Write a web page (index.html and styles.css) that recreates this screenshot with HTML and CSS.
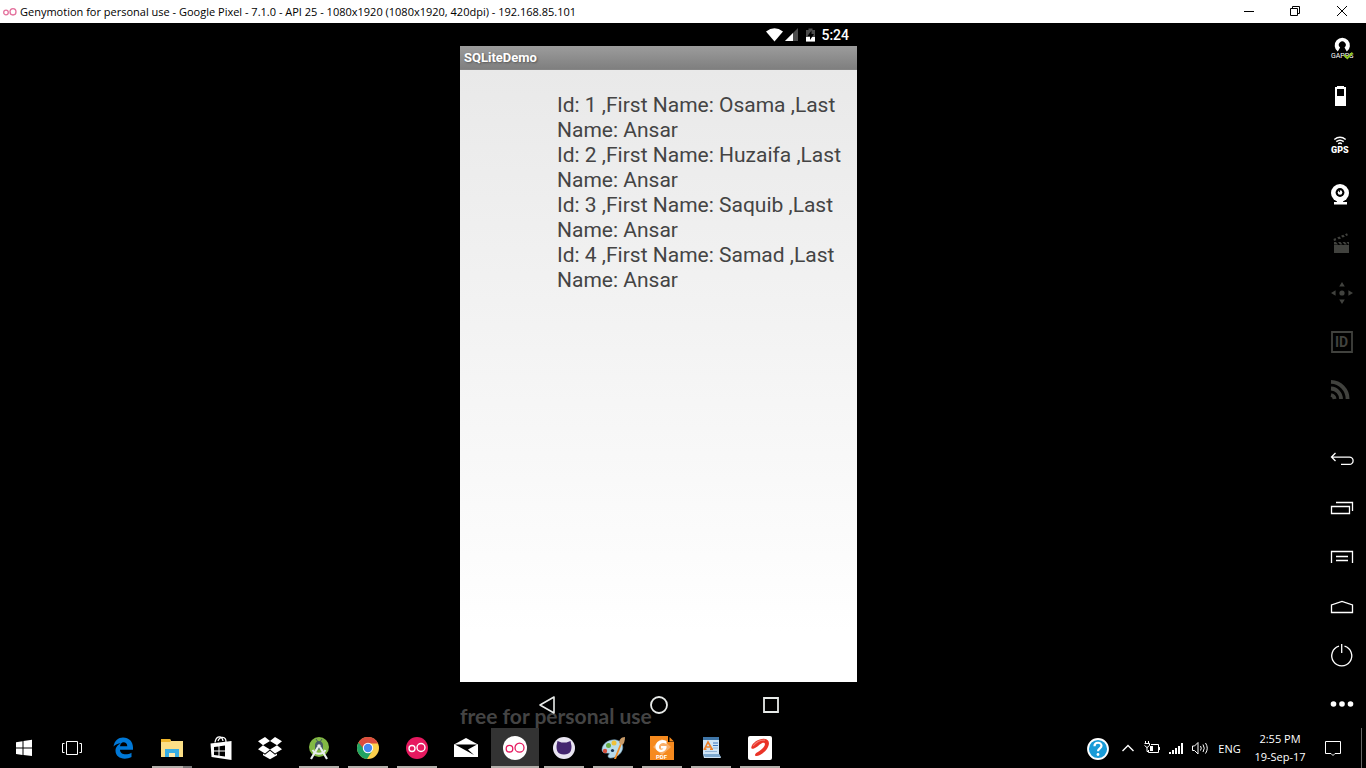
FILE: index.html
```html
<!DOCTYPE html>
<html lang="en">
<head>
<meta charset="utf-8">
<meta name="viewport" content="width=device-width, initial-scale=1">
<title>Genymotion for personal use</title>
<link rel="stylesheet" href="styles.css">
</head>
<body>
<div class="desktop">
  <header class="titlebar">
    <svg class="titlebar-logo" width="16" height="16" viewBox="0 0 16 16" fill="none" stroke="#e4719d" stroke-width="1.3"><circle cx="4" cy="8.5" r="2.3"/><ellipse cx="11" cy="7.8" rx="3" ry="3.2"/></svg>
    <h1 class="titlebar-text">Genymotion for personal use - Google Pixel - 7.1.0 - API 25 - 1080x1920 (1080x1920, 420dpi) - 192.168.85.101</h1>
    <div class="window-controls">
      <button class="window-button" aria-label="Minimize"><svg width="12" height="12" viewBox="0 0 12 12" stroke="#000"><path d="M1 6.500h10"/></svg></button>
      <button class="window-button" aria-label="Restore"><svg width="12" height="12" viewBox="0 0 12 12" fill="none" stroke="#000"><path d="M1.500 3.500h7v7h-7zM3.500 3.500v-2h7v7h-2"/></svg></button>
      <button class="window-button" aria-label="Close"><svg width="12" height="12" viewBox="0 0 12 12" stroke="#000"><path d="M1 1l10 10M11 1L1 11"/></svg></button>
    </div>
  </header>

  <main class="emulator">
    <div class="stage">
      <section class="phone" aria-label="Device screen">
        <div class="status">
          <svg width="52" height="16" viewBox="0 0 52 16">
            <path d="M1 4.500Q9.500-1.800 18 4.500L9.500 14.500z" fill="#fff"/>
            <path d="M33 1v13H20z" fill="#4c4c4c"/><path d="M28 6v8h-8z" fill="#fff"/>
            <path d="M41 3h2.500V1.500h4V3H50v11.500h-9z" fill="#4c4c4c"/><path d="M41 10h9v4.500h-9z" fill="#fff"/>
            <path d="M46.500 3.500l-4 5.500h2.500v4l4-6h-2.500z" fill="#000"/>
          </svg>
          <span>5:24</span>
        </div>
        <h2 class="appbar">SQLiteDemo</h2>
        <div class="app">
          <p class="records">Id: 1 ,First Name: Osama ,Last Name: Ansar<br>Id: 2 ,First Name: Huzaifa ,Last Name: Ansar<br>Id: 3 ,First Name: Saquib ,Last Name: Ansar<br>Id: 4 ,First Name: Samad ,Last Name: Ansar</p>
        </div>
        <div class="navbar">
          <span class="watermark">free for personal use</span>
          <button class="nav-button" aria-label="Back"><svg width="20" height="20" viewBox="0 0 20 20" fill="none" stroke="#e8ebe9" stroke-width="1.600" stroke-linejoin="round"><path d="M17 2v16L3 10z"/></svg></button>
          <button class="nav-button" aria-label="Home"><svg width="20" height="20" viewBox="0 0 20 20" fill="none" stroke="#e8ebe9" stroke-width="1.800"><circle cx="10" cy="10" r="8"/></svg></button>
          <button class="nav-button" aria-label="Recents"><svg width="20" height="20" viewBox="0 0 20 20" fill="none" stroke="#e8ebe9" stroke-width="1.800"><path d="M3 3h14v14H3z"/></svg></button>
        </div>
      </section>
    </div>

    <aside class="tools">
      <div class="tool-group">
        <button class="tool" aria-label="Open GApps"><svg viewBox="0 0 49 49"><path d="M20.800 28.500a7.600 7.600 0 1 1 9 0l-2.300-4a3.400 3.400 0 1 0-4.400 0z" fill="#fff"/><path d="M23.300 29l1-5.200a1.600 1.600 0 1 1 2 0l1 5.200z" fill="#000"/><text class="label-gapps" x="14" y="35">GAPPS</text><path d="M27 32l3.300 3.200 5.200-5.500" fill="none" stroke="#8fc31f" stroke-width="2"/></svg></button>
        <button class="tool" aria-label="Battery"><svg viewBox="0 0 49 49"><path d="M18 15h2v-1h7v1h2v19H18z" fill="#fff"/><path d="M20 17h7v7h-7z" fill="#000"/></svg></button>
        <button class="tool" aria-label="GPS"><svg viewBox="0 0 49 49"><g fill="none" stroke="#fff" stroke-width="1.500"><path d="M17.300 18.500q5.700-4.500 11.400 0M19.300 20.700q3.700-2.800 7.400 0"/><path d="M21.200 22.800q1.800-1.500 3.600 0"/></g><text class="label-gps" x="14" y="32">GPS</text></svg></button>
        <button class="tool" aria-label="Camera"><svg viewBox="0 0 49 49"><circle cx="23" cy="23" r="9" fill="#fff"/><path d="M20 31h6v1h4v2.500H17V32h3z" fill="#fff"/><circle cx="23" cy="22.500" r="4.400" fill="#000"/><circle cx="23" cy="22.500" r="2.300" fill="#fff"/><path d="M23 22.500v-2.300h-2.300z" fill="#000"/></svg></button>
        <button class="tool" aria-label="Screencast"><svg viewBox="0 0 49 49" fill="#41423e"><path d="M17 26h15v8H17zM17 23h2l2 2.500h-4zM21 23h2.500l2 2.500H23zM25.500 23H28l2 2.500h-2.500zM29.500 23H32v2.500h-.5zM16.500 20l2-1 .8 2.300-2.300.7zM20.200 18.400l2.300-.9 1.500 2-2.300.8zM24 16.800l2.300-1 1.500 2-2.300.8zM28 15.200l2-.9.900 2-1.500.7z"/></svg></button>
        <button class="tool" aria-label="Move"><svg viewBox="0 0 49 49" fill="#41423e"><circle cx="25" cy="25" r="2.600"/><path d="M25 14l2.800 4.600h-5.600zM25 36l2.800-4.600h-5.600zM14 25l4.600-2.800v5.600zM36 25l-4.600-2.800v5.600z"/></svg></button>
        <button class="tool" aria-label="Identifiers"><svg viewBox="0 0 49 49"><path d="M15 15h20v20H15z" fill="none" stroke="#41423e" stroke-width="1.800"/><text class="label-id" x="18" y="30">ID</text></svg></button>
        <button class="tool" aria-label="Network"><svg viewBox="0 0 49 49" fill="none" stroke="#41423e" stroke-width="3.800"><path d="M14 15.900A17 17 0 0 1 30.600 33M14 22.500a10.500 10.500 0 0 1 10 10.500"/><path d="M14 29a4.500 4.500 0 0 1 3.600 4"/></svg></button>
      </div>
      <div class="tool-group">
        <button class="tool" aria-label="Back"><svg viewBox="0 0 49 49" class="line"><path d="M18.500 19l-4 4 4 4M14.500 23.200H32.500a3.500 3.500 0 0 1 0 7.200H24"/></svg></button>
        <button class="tool" aria-label="Recent apps"><svg viewBox="0 0 49 49" class="line"><path d="M14.500 23.500h18v7h-18zM19 19.500h16.500V28"/></svg></button>
        <button class="tool" aria-label="Menu"><svg viewBox="0 0 49 49" class="line"><path d="M14.500 31V19.500h21V31M19 24.500h12M19 28.500h12"/></svg></button>
        <button class="tool" aria-label="Home"><svg viewBox="0 0 49 49" class="line"><path d="M14.500 31.500V24L25 20.500 35.500 24v7.500z"/></svg></button>
        <button class="tool" aria-label="Power"><svg viewBox="0 0 49 49" class="line"><path d="M22 16.200a10 10 0 1 0 5.500 0M24.700 14v9"/></svg></button>
        <button class="tool" aria-label="More"><svg viewBox="0 0 49 49" fill="#fff"><circle cx="16.500" cy="25" r="2.800"/><circle cx="25" cy="25" r="2.800"/><circle cx="33.500" cy="25" r="2.800"/></svg></button>
      </div>
    </aside>
  </main>

  <footer class="taskbar">
    <div class="system-buttons">
      <button class="task" aria-label="Start"><svg viewBox="0 0 24 24" fill="#fff"><path d="M4 6.200l6.500-1v6.300H4zM11.500 5l8.500-1.200v7.700h-8.500zM4 12.500h6.500v6.400L4 18zM11.500 12.500H20V20l-8.500-1z"/></svg></button>
      <button class="task" aria-label="Task view"><svg viewBox="0 0 24 24" fill="none" stroke="#fff"><path d="M6.500 5.500h11v13h-11zM4.500 7.500h-2v9h2M19.500 7.500h2v9h-2"/></svg></button>
    </div>
    <nav class="apps" aria-label="Applications">
      <button class="task" aria-label="Edge"><svg viewBox="0 0 24 24"><path d="M2.500 10.500C3.500 4.500 7.500 1.500 12 1.500c6 0 10 4.200 10 10v2.300H9c0 5 7 5.700 11.500 2.900v4.400C13 24.700 4.500 22 4.500 14.800c0-3.500 2.300-6.400 5.500-7.600-3 .2-5.800 1.300-7.500 3.300zM9 10.300h7.300c0-3-1.800-4.100-3.600-4.100-2.200 0-3.500 1.700-3.700 4.100z" fill="#0078d7"/></svg></button>
      <button class="task running grouped" aria-label="File Explorer"><svg viewBox="0 0 24 24"><path d="M1 3h9l1 2h12v16H1z" fill="#fbdf86"/><path d="M1 3h9l1 2-1 1H1z" fill="#efb62b"/><path d="M5 13h14v8h-4v-4H9v4H5z" fill="#37aee3"/><path d="M9 17h6v4H9z" fill="#fbe9ac"/></svg></button>
      <button class="task" aria-label="Store"><svg viewBox="0 0 24 24"><path d="M6 6.500C7-.5 13-1 14 5M9 5c2-5 8-5 8 1" fill="none" stroke="#fff" stroke-width="1.300"/><path d="M1.500 7.500L22.500 5v19L2.500 21z" fill="#fff"/><path d="M5 11l4.500-.6v4.200H5zM10.500 10.200l5.500-.7v5.100h-5.500zM5 15.500h4.500v4.100L5 19zM10.500 15.500H16v5l-5.500-.7z" fill="#000"/></svg></button>
      <button class="task" aria-label="Dropbox"><svg viewBox="0 0 24 24" fill="#fff"><path d="M7 1l5 4-7 4.300-5-4zM17 1l-5 4 7 4.300 5-4zM0 13.200l5-3.900 7 4.300-5 4zM24 13.200l-5-3.900-7 4.300 5 4zM12 14.800l5 4 2-1.300v1.700l-7 4-7-4v-1.700l2 1.300z"/></svg></button>
      <button class="task running" aria-label="Android Studio"><svg viewBox="0 0 24 24"><circle cx="12" cy="11" r="10" fill="#82b944"/><path d="M8.500 9a3.500 3.500 0 0 1 7 0v4h-7zM9 3l2 3M15 3l-2 3" fill="#455a64" stroke="#455a64"/><path d="M11 11L4 23M13 11l7 12" stroke="#e8eeee" stroke-width="2.200"/><path d="M5.500 14c3 5 10 5 13 0" fill="none" stroke="#e8eeee" stroke-width="2"/><circle cx="12" cy="10" r="1.800" fill="#eee"/></svg></button>
      <button class="task running" aria-label="Chrome"><svg viewBox="0 0 24 24"><circle cx="12" cy="12" r="11" fill="#fcd04b"/><path d="M12 12L2.500 6.500A11 11 0 0 0 11 23l5.500-8.500z" fill="#20a363"/><path d="M12 12H7L2.500 6.500a11 11 0 0 1 19.500 1H12z" fill="#dc4d3f"/><circle cx="12" cy="12" r="5.200" fill="#fff"/><circle cx="12" cy="12" r="4.200" fill="#4587f3"/></svg></button>
      <button class="task running" aria-label="Genymotion"><svg viewBox="0 0 24 24"><circle cx="12" cy="12" r="11" fill="#e6195f"/><g fill="none" stroke="#fff" stroke-width="1.400"><circle cx="7" cy="12.500" r="3"/><circle cx="16" cy="11.500" r="4"/></g></svg></button>
      <button class="task" aria-label="Mail"><svg viewBox="0 0 24 24"><path d="M0 8.500L12 2l12 6.500V21H0z" fill="#fff"/><path d="M1 8.500h22l-9 5 6 5.500-10-5.500z" fill="#000"/></svg></button>
      <button class="task running active" aria-label="Genymotion player"><svg viewBox="0 0 24 24"><circle cx="12" cy="12" r="12" fill="#fff"/><g fill="none" stroke="#e6195f" stroke-width="1.300"><circle cx="6.500" cy="12.700" r="3.300"/><circle cx="16.500" cy="11.700" r="4.500"/></g></svg></button>
      <button class="task running" aria-label="GitHub Desktop"><svg viewBox="0 0 24 24"><circle cx="12" cy="12" r="11" fill="#e9e5f2"/><path d="M5.500 5l4 1.500h5l4-1.500 1 5c0 4.500-1 8.500-7.500 8.500S4.500 14.500 4.500 10z" fill="#442670"/></svg></button>
      <button class="task running" aria-label="Paint"><svg viewBox="0 0 24 24"><path d="M1 14C1 7 9 3 15 4c5 1 7.500 5 6.500 9-1 5-7 9-12 9-3 0-3-3-1-4 1-2-7 1-7.500-4z" fill="#b9dcec" stroke="#7ca9c6" stroke-width=".6"/><circle cx="4" cy="15" r="2.200" fill="#d6503c"/><circle cx="7.500" cy="9.500" r="2.500" fill="#67ad43"/><circle cx="13" cy="7" r="2.500" fill="#f0c13a"/><circle cx="11.500" cy="14.500" r="1.600" fill="#17324f"/><path d="M13 23l6-15 1.500.8L15 23z" fill="#f2902a"/><path d="M18 7c0-3 2-6 6-6 0 4-1 7-3 8z" fill="#c99b68"/></svg></button>
      <button class="task running" aria-label="Foxit PDF"><svg viewBox="0 0 24 24"><path d="M0 0h18v6h6v18H0z" fill="#f68a1e"/><path d="M19.500 1v4.500h4.500z" fill="#f68a1e"/><path d="M12 3l9 8-9 8-9-8z" fill="#f9ae67"/><path d="M16.500 5C11 2 5 6 5.500 11c.5 6 9 7 11 1v-2H11v2.500h2.500C11 15 8.500 13 9 10.500 9.500 7.500 13 6 16.500 8z" fill="#fff"/><text class="label-pdf" x="6" y="23">PDF</text></svg></button>
      <button class="task running" aria-label="WordPad"><svg viewBox="0 0 24 24"><path d="M4 1h16v17l2 4H5l-1-4z" fill="#cfe4f5"/><path d="M4 1h16v3H4z" fill="#3f76a8"/><path d="M4 18h16l2 3H6z" fill="#7da9cf"/><path d="M14 7h5M14 9.500h5" stroke="#3c75bd"/><path d="M14 12h5M6 15.500h12" stroke="#8fb4d8"/><path d="M5.500 13L9 6l4 7M7 11h5M4.500 13.300h3M11 13.300h3" fill="none" stroke="#ed8129" stroke-width="1.600"/></svg></button>
      <button class="task running" aria-label="Airtel"><svg viewBox="0 0 24 24"><rect width="24" height="24" rx="2" fill="#fff"/><path d="M3.300 11.500C4 6.500 11 2.500 16 2.700c5.500.2 6 5 3.500 9.300-2.500 4.500-8 8-11 8-2.500 0-1.500-2.300.5-3.500 3.500-2 7-4.500 7.800-7.500.5-2.200-1-2.800-3-1.800C11 8.700 8.500 11.700 6 12.500c-1.500.5-2.800.3-2.700-1z" fill="#ea3327"/><path d="M5 10C8 6 13 3.800 17 4.200" fill="none" stroke="#f2796f" stroke-width="1.200"/></svg></button>
    </nav>
    <div class="tray">
      <button class="tray-button help" aria-label="Help"><svg width="24" height="24" viewBox="0 0 24 24"><circle cx="12" cy="13" r="10" fill="#199bd7" stroke="#fff" stroke-width="1.800"/><path d="M8.500 10.200c0-4.500 7-4.500 7-.4 0 2.500-3.500 2.500-3.500 5.500" fill="none" stroke="#fff" stroke-width="2.200"/><circle cx="12" cy="18.500" r="1.400" fill="#fff"/></svg></button>
      <button class="tray-button" aria-label="Show hidden icons"><svg width="16" height="16" viewBox="0 0 16 16" class="thin chevron"><path d="M2.500 11L8 5.500l5.500 5.500"/></svg></button>
      <button class="tray-button" aria-label="Battery status"><svg width="16" height="16" viewBox="0 0 16 16" class="thin"><path d="M7 4.500h7.500v8h-10V10M15.500 7v3M1.500 1v3M4.500 1v3M.5 3.500h5v2L3 7.500.5 5.500M3 7v4.500h2"/><path d="M6 6h3v5H6z" fill="#fff" stroke="none"/></svg></button>
      <button class="tray-button" aria-label="Network status"><svg width="16" height="16" viewBox="0 0 16 16" fill="#fff"><path d="M1 12h2v2H1zM4 10h2v4H4zM7 8h2v6H7zM10 6h2v8h-2zM13 3h2v11h-2z"/></svg></button>
      <button class="tray-button" aria-label="Volume"><svg width="18" height="16" viewBox="0 0 18 16" class="thin"><path d="M1.500 6v4.500h2L7 14V2.500L3.500 6zM9.500 6q1.500 2.200 0 4.500M12 4.500q2.500 3.700 0 7.500M14.500 3q3.500 5.200 0 10.500"/></svg></button>
      <button class="tray-button language">ENG</button>
      <button class="tray-button clock"><time>2:55 PM</time><span>19-Sep-17</span></button>
      <button class="tray-button notifications" aria-label="Notifications"><svg width="18" height="18" viewBox="0 0 18 18" class="thin"><path d="M1.500 2.500h15v12h-5.500L9 16.500 7 14.500H1.500z"/></svg></button>
      <button class="show-desktop" aria-label="Show desktop"></button>
    </div>
  </footer>
</div>
</body>
</html>
```
FILE: styles.css
```css
* {
  box-sizing: border-box;
}

body {
  margin: 0;
  background: #000;
  color: #fff;
  font-family: "Open Sans", "Noto Sans", sans-serif;
  font-size: 12px;
}

button {
  margin: 0;
  padding: 0;
  border: 0;
  background: none;
  color: inherit;
  font: inherit;
}

svg {
  display: block;
}

.desktop {
  display: grid;
  grid-template-rows: 23px minmax(0, 1fr) 40px;
  height: 100vh;
}

/* Window title bar */
.titlebar {
  display: flex;
  align-items: center;
  background: #fff;
  color: #000;
}

.titlebar-logo {
  margin: 0 2px;
}

.titlebar-text {
  flex: 1;
  margin: 0;
  font-size: 11px;
  font-weight: 400;
  white-space: nowrap;
}

.window-controls {
  display: flex;
  height: 100%;
}

.window-button {
  display: grid;
  place-items: center;
  width: 46px;
  padding-bottom: 2px;
}

.window-button:last-child {
  width: 48px;
}

/* Emulator area */
.emulator {
  display: grid;
  grid-template-columns: 1fr 49px;
}

.stage {
  display: flex;
  justify-content: center;
  min-height: 0;
}

.phone {
  display: grid;
  grid-template-rows: 23px 24px 1fr 46px;
  height: 100%;
  aspect-ratio: 397 / 705;
  font-family: Roboto, sans-serif;
}

.status {
  display: flex;
  align-items: center;
  justify-content: flex-end;
  gap: 4px;
  padding-right: 8px;
  font-size: 14px;
  font-weight: 500;
}

.appbar {
  margin: 0;
  padding-left: 4px;
  background: linear-gradient(#9c9c9c, #7f7f7f);
  border-bottom: 1px solid #858585;
  font-size: 13px;
  font-weight: 700;
  line-height: 24px;
  text-shadow: 1px 1px 2px #555;
}

.app {
  padding: 23px 8px 0 97px;
  background: linear-gradient(#e9e9e9, #fff 92%);
  color: #444;
}

.records {
  margin: 0;
  font-size: 21px;
  line-height: 25px;
}

.navbar {
  position: relative;
  display: flex;
  align-items: center;
  justify-content: center;
  gap: 92px;
}

.nav-button {
  position: relative;
}

.watermark {
  position: absolute;
  left: 0;
  bottom: 0;
  color: #444;
  font-family: Lato, sans-serif;
  font-size: 21px;
  font-weight: 700;
  line-height: 24px;
}

/* Emulator tool strip */
.tools {
  display: flex;
  flex-direction: column;
  justify-content: space-between;
}

.tool {
  display: block;
  width: 49px;
  height: 49px;
}

.line {
  fill: none;
  stroke: #fff;
  stroke-width: 1.3;
}

.label-gapps,
.label-gps,
.label-id,
.label-pdf {
  fill: #fff;
  font-family: Roboto, sans-serif;
  font-size: 7px;
}

.label-gps {
  font-size: 9px;
  font-weight: 900;
}

.label-id {
  fill: #41423e;
  font-size: 14px;
  font-weight: 700;
}

.label-pdf {
  font-size: 6px;
  font-weight: 700;
}

/* Taskbar */
.taskbar {
  display: flex;
  justify-content: space-between;
}

.system-buttons,
.apps,
.tray {
  display: flex;
}

.apps {
  gap: 1px;
  margin: 0 auto 0 3px;
}

.task {
  display: grid;
  place-items: center;
  width: 48px;
}

.task svg {
  width: 24px;
  height: 24px;
}

.running {
  background: linear-gradient(#b3b0ab, #b3b0ab) center bottom / 40px 2px no-repeat;
}

.grouped {
  background-image: linear-gradient(90deg, #b3b0ab 31px, #777 31px);
}

.active {
  background-color: #333;
  background-size: 48px 2px;
}

.tray {
  align-items: stretch;
}

.tray-button {
  display: grid;
  place-items: center;
  width: 24px;
}

.help {
  margin-right: 6px;
}

.language {
  width: 35px;
}

.clock {
  align-content: center;
  width: 66px;
  line-height: 18px;
}

.language,
.clock {
  font-size: 11px;
}

.notifications {
  width: 40px;
}

.show-desktop {
  width: 5px;
  margin-left: 8px;
  border-left: 1px solid #666;
}

.thin {
  fill: none;
  stroke: #fff;
}

.chevron {
  stroke-width: 1.4;
}
```
